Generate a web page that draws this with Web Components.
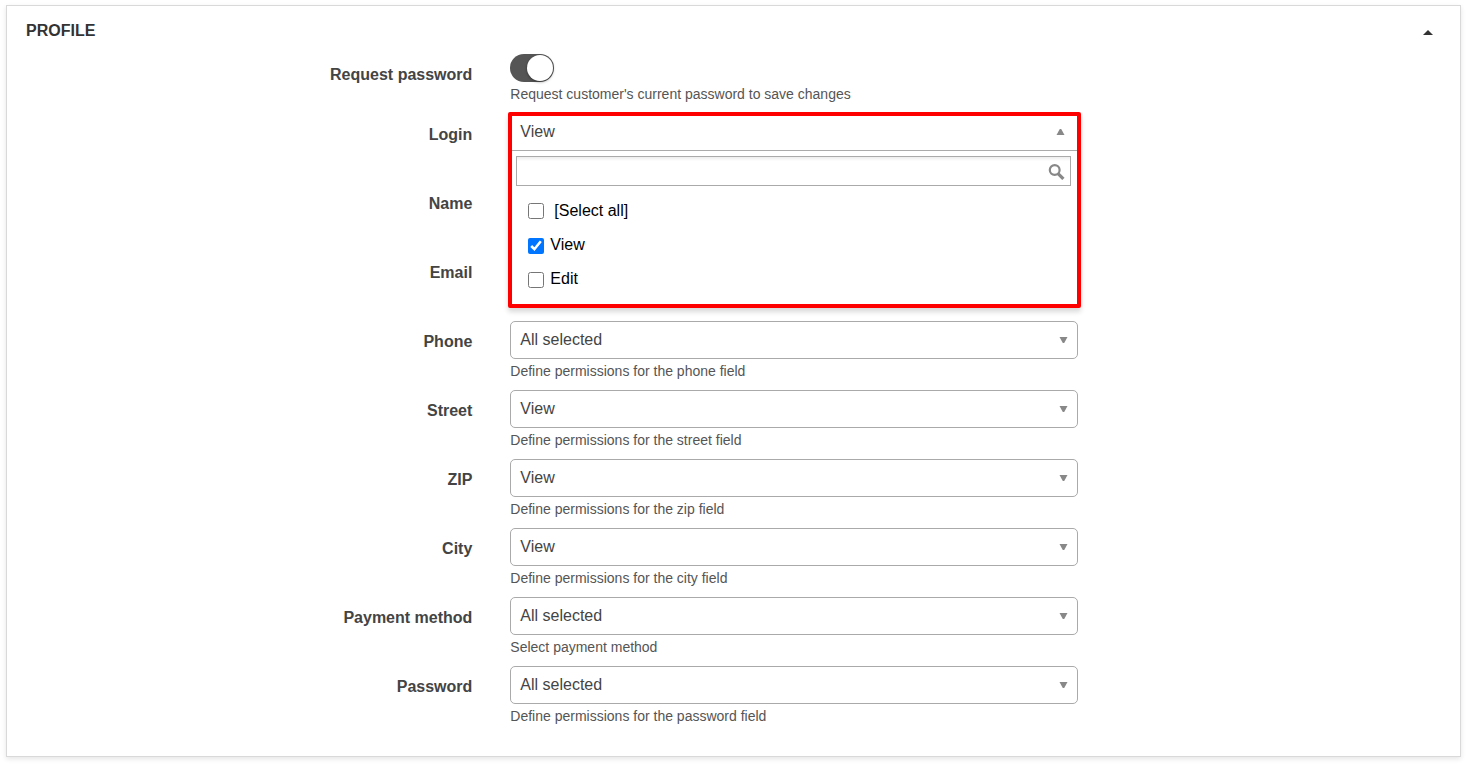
<!DOCTYPE html>
<html lang="en">
<head>
<meta charset="utf-8">
<meta name="viewport" content="width=device-width, initial-scale=1">
<title>Profile</title>
<style>
  body {
    margin: 0;
    padding: 5px 8px 8px 6px;
    background: #fff;
    color: #444;
    font-family: "Liberation Sans", Arial, sans-serif;
    font-size: 16px;
    line-height: 20px;
  }
</style>
</head>
<body>
<settings-panel heading="PROFILE">
  <toggle-field label="Request password" hint="Request customer's current password to save changes"></toggle-field>
  <form-row label="Login" overlay><multi-select label="Login" value="View"></multi-select></form-row>
  <form-row label="Name"></form-row>
  <form-row label="Email"></form-row>
  <select-field label="Phone" value="All selected" hint="Define permissions for the phone field"></select-field>
  <select-field label="Street" value="View" hint="Define permissions for the street field"></select-field>
  <select-field label="ZIP" value="View" hint="Define permissions for the zip field"></select-field>
  <select-field label="City" value="View" hint="Define permissions for the city field"></select-field>
  <select-field label="Payment method" value="All selected" hint="Select payment method"></select-field>
  <select-field label="Password" value="All selected" hint="Define permissions for the password field"></select-field>
</settings-panel>

<script>
const GRID = `
  * { box-sizing: border-box; }
  :host { display: grid; grid-template-columns: 4fr 5fr 3fr; min-height: 69px; }
  .label { padding: 11px 19px 0; text-align: right; font-weight: bold; color: #444; }
  .control { padding: 0 19px; min-width: 0; }
  .hint { margin: 2px 0 0; font-size: 14px; color: #555; }
`;

customElements.define('settings-panel', class extends HTMLElement {
  connectedCallback() {
    this.attachShadow({ mode: 'open' }).innerHTML = `
      <style>
        :host { display: block; background: #fff; border: 1px solid #d9d9d9;
          box-shadow: 0 2px 5px rgba(0, 0, 0, .1); padding-bottom: 21px; }
        header { display: flex; justify-content: space-between; align-items: center;
          padding: 15px 18px 13px 19px; }
        h2 { margin: 0; font-size: 16px; line-height: 20px; color: #333; }
        button { display: flex; align-items: center; justify-content: center;
          width: 28px; height: 20px; padding: 2px 0 0; border: 0; background: none; color: #333; }
      </style>
      <header>
        <h2>${this.getAttribute('heading')}</h2>
        <button type="button" aria-label="Collapse" aria-expanded="true">
          <svg width="10" height="5" viewBox="0 0 10 5"><path d="M0 5 L5 0 L10 5 Z" fill="currentColor"/></svg>
        </button>
      </header>
      <slot></slot>`;
  }
});

customElements.define('form-row', class extends HTMLElement {
  connectedCallback() {
    this.attachShadow({ mode: 'open' }).innerHTML = `
      <style>${GRID}
        :host([overlay]) { position: relative; z-index: 1; }
      </style>
      <span class="label">${this.getAttribute('label')}</span>
      <div class="control"><slot></slot></div>`;
  }
});

customElements.define('toggle-field', class extends HTMLElement {
  connectedCallback() {
    this.attachShadow({ mode: 'open' }).innerHTML = `
      <style>${GRID}
        :host { min-height: 60px; }
        input { appearance: none; display: block; width: 44px; height: 28px; margin: 0;
          padding: 1px; border-radius: 14px; background: #555; }
        input::before { content: ""; display: block; width: 26px; height: 26px;
          border-radius: 50%; background: #fff; box-shadow: 0 1px 3px rgba(0, 0, 0, .4); }
        input:checked::before { margin-left: 16px; }
      </style>
      <label class="label" for="c">${this.getAttribute('label')}</label>
      <div class="control">
        <input id="c" type="checkbox" role="switch" aria-describedby="h" checked>
        <p class="hint" id="h">${this.getAttribute('hint')}</p>
      </div>`;
  }
});

customElements.define('select-field', class extends HTMLElement {
  connectedCallback() {
    this.attachShadow({ mode: 'open' }).innerHTML = `
      <style>${GRID}
        .box { display: grid; align-items: center; }
        .box > * { grid-area: 1 / 1; }
        select { appearance: none; width: 100%; height: 38px; margin: 0; padding: 0 28px 0 9px;
          border: 1px solid #aaa; border-radius: 5px; background: #fff; color: #444;
          font: inherit; }
        svg { justify-self: end; margin-right: 10px; pointer-events: none; }
      </style>
      <label class="label" for="c">${this.getAttribute('label')}</label>
      <div class="control">
        <div class="box">
          <select id="c" aria-describedby="h"><option>${this.getAttribute('value')}</option></select>
          <svg width="9" height="6" viewBox="0 0 9 6"><path d="M0.5 0 H8.5 L5.2 6 H3.8 Z" fill="#888"/></svg>
        </div>
        <p class="hint" id="h">${this.getAttribute('hint')}</p>
      </div>`;
  }
});

customElements.define('multi-select', class extends HTMLElement {
  connectedCallback() {
    this.attachShadow({ mode: 'open' }).innerHTML = `
      <style>
        * { box-sizing: border-box; }
        :host { display: block; position: relative; height: 38px; }
        .open { position: absolute; top: -2px; left: -2px; right: -3px; background: #fff;
          border: 4px solid #f00; border-radius: 2px; box-shadow: 0 4px 5px rgba(0, 0, 0, .15); }
        .current { display: flex; align-items: center; justify-content: space-between;
          width: 100%; height: 35px; padding: 0 12px 2px 8px; border: 0;
          border-bottom: 1px solid #aaa; background: #fff; color: #444; font: inherit; }
        .search { display: flex; align-items: center; margin: 5px 6px 9px 4px; height: 30px;
          padding-right: 5px; border: 1px solid #aaa;
          background: linear-gradient(#eee 1%, #fff 15%); }
        .search input { flex: 1; min-width: 0; height: 28px; border: 0; padding: 0 5px;
          background: none; font: inherit; outline: 0; }
        ul { list-style: none; margin: 0; padding: 0 0 6px; color: #000; }
        li { display: flex; padding: 5px 16px 9px; }
        li:first-child { padding-top: 6px; }
        label { display: flex; align-items: flex-start; gap: 6px; }
        li:first-child label { gap: 10px; }
        li input { width: 16px; height: 16px; margin: 2px 0 0; }
        li:nth-child(n+2) input { margin-top: 3px; }
      </style>
      <div class="open">
        <button class="current" type="button" aria-haspopup="listbox" aria-expanded="true" aria-label="${this.getAttribute('label')}: ${this.getAttribute('value')}">
          <span>${this.getAttribute('value')}</span>
          <svg width="9" height="6" viewBox="0 0 9 6"><path d="M0.5 6 H8.5 L5.2 0 H3.8 Z" fill="#888"/></svg>
        </button>
        <div class="search">
          <input type="search" aria-label="Search options">
          <svg width="17" height="17" viewBox="0 0 17 17" fill="none" stroke="#888">
            <circle cx="6.7" cy="7" r="4.9" stroke-width="2.2"/>
            <path d="M10.3 10.8 L15.4 15.9" stroke-width="3.2"/>
          </svg>
        </div>
        <ul>
          <li><label><input type="checkbox">[Select all]</label></li>
          <li><label><input type="checkbox" checked>View</label></li>
          <li><label><input type="checkbox">Edit</label></li>
        </ul>
      </div>`;
  }
});
</script>
</body>
</html>
